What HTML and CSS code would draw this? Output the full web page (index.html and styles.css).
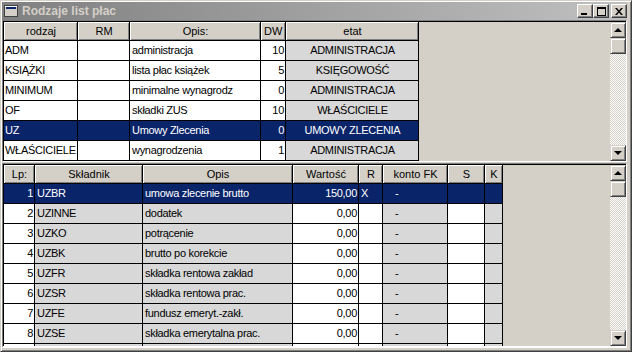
FILE: index.html
```html
<!DOCTYPE html>
<html lang="pl">

<head>
    <meta charset="UTF-8">
    <meta name="viewport" content="width=device-width, initial-scale=1.0">
    <title>Rodzaje list płac</title>
    <link rel="stylesheet" href="styles.css">
</head>

<body>
    <div class="window">
        <div class="titlebar">
            <svg class="app-icon" width="14" height="12" viewBox="0 0 14 12">
                <rect x="0.5" y="0.5" width="13" height="11" fill="#d4d0c8" stroke="#404040"/>
                <rect x="1" y="1" width="12" height="1" fill="#fff"/>
                <rect x="2" y="2" width="10" height="2" fill="#0a246a"/>
            </svg>
            <span class="title">Rodzaje list płac</span>
            <div class="title-buttons">
                <div class="tbtn">
                    <svg width="8" height="7" viewBox="0 0 8 7"><rect x="0" y="5" width="6" height="2" fill="#000"/></svg>
                </div>
                <div class="tbtn">
                    <svg width="9" height="9" viewBox="0 0 9 9"><rect x="0.5" y="0.5" width="8" height="8" fill="none" stroke="#000"/><rect x="0" y="0" width="9" height="2" fill="#000"/></svg>
                </div>
                <div class="tbtn close">
                    <svg width="8" height="7" viewBox="0 0 8 7"><path d="M0 0h2l2 2.5 2-2.5h2l-3 3.5 3 3.5h-2l-2-2.5-2 2.5h-2l3-3.5z" fill="#000"/></svg>
                </div>
            </div>
        </div>

        <!-- list types -->
        <div class="pane pane-top">
            <div class="grid-area grid-top">
                <div class="row head">
                    <div class="cell">rodzaj</div>
                    <div class="cell">RM</div>
                    <div class="cell">Opis:</div>
                    <div class="cell left">DW</div>
                    <div class="cell">etat</div>
                </div>
                <div class="row">
                    <div class="cell">ADM</div>
                    <div class="cell"></div>
                    <div class="cell">administracja</div>
                    <div class="cell num">10</div>
                    <div class="cell grey center">ADMINISTRACJA</div>
                </div>
                <div class="row">
                    <div class="cell">KSIĄŻKI</div>
                    <div class="cell"></div>
                    <div class="cell">lista płac książek</div>
                    <div class="cell num">5</div>
                    <div class="cell grey center">KSIĘGOWOŚĆ</div>
                </div>
                <div class="row">
                    <div class="cell">MINIMUM</div>
                    <div class="cell"></div>
                    <div class="cell">minimalne wynagrodz</div>
                    <div class="cell num">0</div>
                    <div class="cell grey center">ADMINISTRACJA</div>
                </div>
                <div class="row">
                    <div class="cell">OF</div>
                    <div class="cell"></div>
                    <div class="cell">składki ZUS</div>
                    <div class="cell num">10</div>
                    <div class="cell grey center">WŁAŚCICIELE</div>
                </div>
                <div class="row selected">
                    <div class="cell">UZ</div>
                    <div class="cell"></div>
                    <div class="cell">Umowy Zlecenia</div>
                    <div class="cell num">0</div>
                    <div class="cell grey center">UMOWY ZLECENIA</div>
                </div>
                <div class="row">
                    <div class="cell">WŁAŚCICIELE</div>
                    <div class="cell"></div>
                    <div class="cell">wynagrodzenia</div>
                    <div class="cell num">1</div>
                    <div class="cell grey center">ADMINISTRACJA</div>
                </div>
            </div>
            <div class="scrollbar">
                <div class="sb-btn"><span class="arrow-up"></span></div>
                <div class="sb-btn thumb"></div>
                <div class="track"></div>
                <div class="sb-btn"><span class="arrow-down"></span></div>
            </div>
        </div>

        <!-- components of the selected list -->
        <div class="pane pane-bottom">
            <div class="grid-area grid-bottom">
                <div class="row head">
                    <div class="cell">Lp:</div>
                    <div class="cell">Składnik</div>
                    <div class="cell">Opis</div>
                    <div class="cell">Wartość</div>
                    <div class="cell">R</div>
                    <div class="cell">konto FK</div>
                    <div class="cell">S</div>
                    <div class="cell">K</div>
                </div>
                <div class="row selected">
                    <div class="cell num">1</div>
                    <div class="cell grey">UZBR</div>
                    <div class="cell grey">umowa zlecenie brutto</div>
                    <div class="cell num">150,00</div>
                    <div class="cell">X</div>
                    <div class="cell grey dash">-</div>
                    <div class="cell"></div>
                    <div class="cell grey"></div>
                </div>
                <div class="row">
                    <div class="cell num">2</div>
                    <div class="cell grey">UZINNE</div>
                    <div class="cell grey">dodatek</div>
                    <div class="cell num">0,00</div>
                    <div class="cell"></div>
                    <div class="cell grey dash">-</div>
                    <div class="cell"></div>
                    <div class="cell grey"></div>
                </div>
                <div class="row">
                    <div class="cell num">3</div>
                    <div class="cell grey">UZKO</div>
                    <div class="cell grey">potrącenie</div>
                    <div class="cell num">0,00</div>
                    <div class="cell"></div>
                    <div class="cell grey dash">-</div>
                    <div class="cell"></div>
                    <div class="cell grey"></div>
                </div>
                <div class="row">
                    <div class="cell num">4</div>
                    <div class="cell grey">UZBK</div>
                    <div class="cell grey">brutto po korekcie</div>
                    <div class="cell num">0,00</div>
                    <div class="cell"></div>
                    <div class="cell grey dash">-</div>
                    <div class="cell"></div>
                    <div class="cell grey"></div>
                </div>
                <div class="row">
                    <div class="cell num">5</div>
                    <div class="cell grey">UZFR</div>
                    <div class="cell grey">składka rentowa zakład</div>
                    <div class="cell num">0,00</div>
                    <div class="cell"></div>
                    <div class="cell grey dash">-</div>
                    <div class="cell"></div>
                    <div class="cell grey"></div>
                </div>
                <div class="row">
                    <div class="cell num">6</div>
                    <div class="cell grey">UZSR</div>
                    <div class="cell grey">składka rentowa prac.</div>
                    <div class="cell num">0,00</div>
                    <div class="cell"></div>
                    <div class="cell grey dash">-</div>
                    <div class="cell"></div>
                    <div class="cell grey"></div>
                </div>
                <div class="row">
                    <div class="cell num">7</div>
                    <div class="cell grey">UZFE</div>
                    <div class="cell grey">fundusz emeryt.-zakł.</div>
                    <div class="cell num">0,00</div>
                    <div class="cell"></div>
                    <div class="cell grey dash">-</div>
                    <div class="cell"></div>
                    <div class="cell grey"></div>
                </div>
                <div class="row">
                    <div class="cell num">8</div>
                    <div class="cell grey">UZSE</div>
                    <div class="cell grey">składka emerytalna prac.</div>
                    <div class="cell num">0,00</div>
                    <div class="cell"></div>
                    <div class="cell grey dash">-</div>
                    <div class="cell"></div>
                    <div class="cell grey"></div>
                </div>
                <div class="row">
                    <div class="cell"></div>
                    <div class="cell grey"></div>
                    <div class="cell grey"></div>
                    <div class="cell"></div>
                    <div class="cell"></div>
                    <div class="cell grey"></div>
                    <div class="cell"></div>
                    <div class="cell grey"></div>
                </div>
            </div>
            <div class="scrollbar">
                <div class="sb-btn"><span class="arrow-up"></span></div>
                <div class="sb-btn thumb"></div>
                <div class="track"></div>
                <div class="sb-btn"><span class="arrow-down"></span></div>
            </div>
        </div>
    </div>
</body>

</html>
```

FILE: styles.css
```css
body {
    margin: 0;
    font-family: "Liberation Sans", Arial, sans-serif;
    font-size: 11px;
    color: #000;
    background-color: #d4d0c8;
}

.window {
    width: 632px;
    height: 352px;
    box-sizing: border-box;
    border: 1px solid;
    border-color: #d4d0c8 #404040 #404040 #d4d0c8;
    box-shadow: inset 1px 1px #fff, inset -1px -1px #808080;
    padding: 1px 4px 3px 1px;
    background-color: #d4d0c8;
    display: flex;
    flex-direction: column;
    overflow: hidden;
}

/* title bar (inactive window) */
.titlebar {
    height: 18px;
    flex: none;
    display: flex;
    align-items: center;
    background: linear-gradient(to right, #808080, #c0c0c0);
    padding-left: 2px;
}

.app-icon {
    margin-right: 4px;
}

.title {
    color: #d4d0c8;
    font-weight: bold;
    font-size: 12px;
}

.title-buttons {
    margin-left: auto;
    display: flex;
}

.tbtn {
    width: 16px;
    height: 14px;
    box-sizing: border-box;
    background-color: #d4d0c8;
    border: 1px solid;
    border-color: #fff #404040 #404040 #fff;
    box-shadow: inset -1px -1px #808080;
    display: flex;
    align-items: center;
    justify-content: center;
}

.tbtn.close {
    margin-left: 2px;
}

/* panes */
.pane {
    flex: none;
    display: flex;
    border: 1px solid;
    border-color: #808080 #fff #fff #808080;
    padding: 1px 0 0 1px;
    box-shadow: inset 1px 1px #000;
    overflow: hidden;
}

.pane-top {
    height: 142px;
    box-sizing: border-box;
}

.pane-bottom {
    height: 185px;
    box-sizing: border-box;
    margin-top: 1px;
    border-bottom-width: 2px;
}

.grid-area {
    flex: 1;
    overflow: hidden;
    background-color: #d4d0c8;
}

.row {
    display: grid;
}

.grid-top .row {
    grid-template-columns: 74px 52px 131px 25px 133px;
}

.grid-bottom .row {
    grid-template-columns: 31px 108px 150px 66px 24px 65px 37px 18px;
}

.cell {
    box-sizing: border-box;
    height: 20px;
    line-height: 19px;
    padding: 0 1px 0 2px;
    border-right: 1px solid #000;
    border-bottom: 1px solid #000;
    background-color: #fff;
    white-space: nowrap;
    overflow: hidden;
    letter-spacing: -0.3px;
}

.grid-top .row .cell:first-child {
    padding-left: 1px;
    padding-right: 0;
}

.head .cell {
    height: 19px;
    line-height: 18px;
    text-align: center;
    background-color: #d4d0c8;
    box-shadow: inset 1px 1px #fff, inset -1px -1px #808080;
    letter-spacing: 0;
}

.head .cell.left {
    text-align: left;
    padding-left: 3px;
}

.cell.grey {
    background-color: #d8d8d8;
}

.cell.num {
    text-align: right;
    padding-right: 1px;
}

.cell.center {
    text-align: center;
}

.cell.dash {
    padding-left: 12px;
}

.row.selected .cell {
    background-color: #0a246a;
    color: #fff;
}

/* scrollbars */
.scrollbar {
    width: 16px;
    flex: none;
    display: flex;
    flex-direction: column;
    background: repeating-conic-gradient(#fff 0 25%, #d4d0c8 0 50%) 0 0 / 2px 2px;
}

.sb-btn {
    height: 16px;
    flex: none;
    box-sizing: border-box;
    background-color: #d4d0c8;
    border: 1px solid;
    border-color: #d4d0c8 #404040 #404040 #d4d0c8;
    box-shadow: inset 1px 1px #fff, inset -1px -1px #808080;
    display: flex;
    align-items: center;
    justify-content: center;
}

.track {
    flex: 1;
}

.arrow-up,
.arrow-down {
    width: 0;
    height: 0;
    border-left: 4px solid transparent;
    border-right: 4px solid transparent;
}

.arrow-up {
    border-bottom: 4px solid #000;
    margin-top: -1px;
}

.arrow-down {
    border-top: 4px solid #000;
}
```
